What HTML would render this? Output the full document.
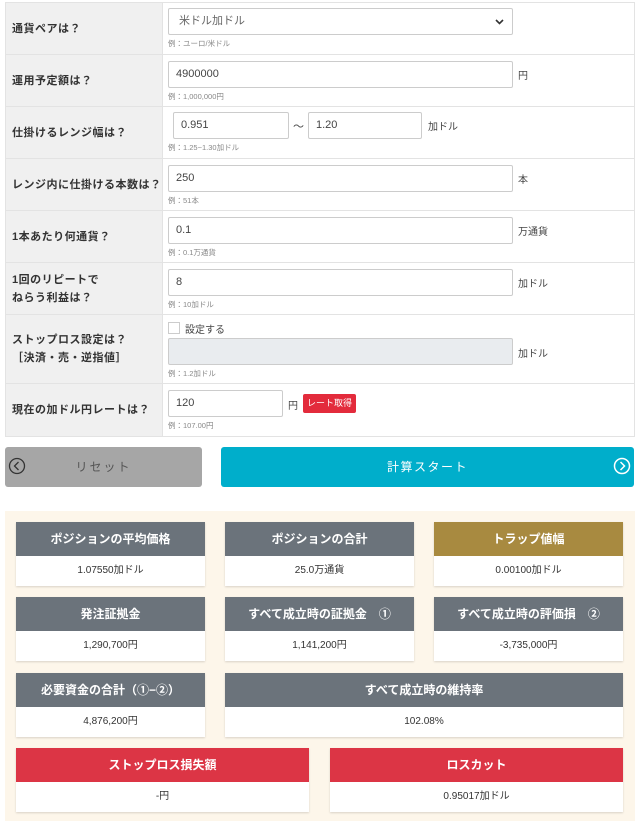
<!DOCTYPE html>
<html><head><meta charset="utf-8"><style>
*{box-sizing:border-box;margin:0;padding:0}
body{width:640px;height:821px;background:#fff;position:relative;font-family:"Liberation Sans","Noto Sans CJK JP",sans-serif;color:#333;overflow:hidden}
.a{position:absolute}
.row{position:absolute;left:5px;width:630px;border:1px solid #e3e3e3;border-top:none;background:#fff}
.lab{position:absolute;left:0;top:0;bottom:0;width:157px;background:#f0f0f0;border-right:1px solid #e3e3e3;font-size:11px;font-weight:bold;display:flex;align-items:center;padding-left:6px;line-height:18px;letter-spacing:.5px}
.inp{position:absolute;height:27px;border:1px solid #ccc;border-radius:2px;background:#fff;font-size:11px;padding-left:7px;line-height:25px;color:#444}
.hint{position:absolute;font-size:7.5px;color:#888}
.unit{position:absolute;font-size:10px;color:#444}
.card{position:absolute;box-shadow:0 1px 2px rgba(0,0,0,.15);background:#fff}
.card .h{height:34px;background:#6b737b;color:#fff;font-weight:bold;font-size:12px;text-align:center;line-height:34px}
.card .v{height:30px;font-size:10px;text-align:center;line-height:30px;color:#333}
</style></head><body>
<div class="a" style="left:5px;top:2px;width:630px;border-top:1px solid #e3e3e3"></div>
<div class="row" style="top:3px;height:52px"><div class="lab">通貨ペアは？</div></div>
<div class="row" style="top:55px;height:52px"><div class="lab">運用予定額は？</div></div>
<div class="row" style="top:107px;height:52px"><div class="lab">仕掛けるレンジ幅は？</div></div>
<div class="row" style="top:159px;height:52px"><div class="lab">レンジ内に仕掛ける本数は？</div></div>
<div class="row" style="top:211px;height:52px"><div class="lab">1本あたり何通貨？</div></div>
<div class="row" style="top:263px;height:52px"><div class="lab">1回のリピートで<br>ねらう利益は？</div></div>
<div class="row" style="top:315px;height:69px"><div class="lab">ストップロス設定は？<br>［決済・売・逆指値］</div></div>
<div class="row" style="top:384px;height:53px"><div class="lab">現在の加ドル円レートは？</div></div>

<div class="inp" style="left:168px;top:8px;width:345px;padding-left:10px;color:#666">米ドル加ドル<svg class="a" style="right:8px;top:10px" width="9" height="6" viewBox="0 0 9 6"><path d="M1 1L4.5 4.5L8 1" stroke="#333" stroke-width="1.6" fill="none"/></svg></div>
<div class="hint" style="left:168px;top:38px">例：ユーロ/米ドル</div>

<div class="inp" style="left:168px;top:61px;width:345px">4900000</div><div class="unit" style="left:518px;top:67px">円</div>
<div class="hint" style="left:168px;top:91px">例：1,000,000円</div>

<div class="inp" style="left:173px;top:112px;width:116px">0.951</div>
<div class="unit" style="left:293px;top:118px;font-size:11px">〜</div>
<div class="inp" style="left:308px;top:112px;width:114px">1.20</div>
<div class="unit" style="left:428px;top:118px">加ドル</div>
<div class="hint" style="left:168px;top:142px">例：1.25~1.30加ドル</div>

<div class="inp" style="left:168px;top:165px;width:345px">250</div><div class="unit" style="left:518px;top:171px">本</div>
<div class="hint" style="left:168px;top:195px">例：51本</div>

<div class="inp" style="left:168px;top:217px;width:345px">0.1</div><div class="unit" style="left:518px;top:223px">万通貨</div>
<div class="hint" style="left:168px;top:247px">例：0.1万通貨</div>

<div class="inp" style="left:168px;top:269px;width:345px">8</div><div class="unit" style="left:518px;top:275px">加ドル</div>
<div class="hint" style="left:168px;top:299px">例：10加ドル</div>

<div class="a" style="left:168px;top:322px;width:12px;height:12px;border:1px solid #ccc;background:#fff"></div>
<div class="unit" style="left:185px;top:321px">設定する</div>
<div class="inp" style="left:168px;top:338px;width:345px;background:#e9ecef"></div><div class="unit" style="left:518px;top:345px">加ドル</div>
<div class="hint" style="left:168px;top:368px">例：1.2加ドル</div>

<div class="inp" style="left:168px;top:390px;width:115px">120</div><div class="unit" style="left:288px;top:397px">円</div>
<div class="a" style="left:303px;top:394px;width:53px;height:19px;background:#e32b3c;border-radius:2px;color:#fff;font-size:9px;text-align:center;line-height:19px">レート取得</div>
<div class="hint" style="left:168px;top:420px">例：107.00円</div>

<div class="a" style="left:5px;top:447px;width:197px;height:40px;background:#a6a6a6;border-radius:3px;color:#555;font-size:12px;text-align:center;line-height:40px;letter-spacing:2px">リセット
<svg class="a" style="left:3px;top:10px" width="18" height="18" viewBox="0 0 18 18"><circle cx="9" cy="9" r="7.5" stroke="#333" stroke-width="1.3" fill="none"/><path d="M10.5 5L6.5 9L10.5 13" stroke="#333" stroke-width="1.3" fill="none"/></svg></div>
<div class="a" style="left:221px;top:447px;width:413px;height:40px;background:#00aecb;border-radius:3px;color:#fff;font-size:12px;text-align:center;line-height:40px;letter-spacing:1.5px">計算スタート
<svg class="a" style="right:3px;top:10px" width="18" height="18" viewBox="0 0 18 18"><circle cx="9" cy="9" r="7.5" stroke="#fff" stroke-width="1.5" fill="none"/><path d="M7.5 5L11.5 9L7.5 13" stroke="#fff" stroke-width="1.5" fill="none"/></svg></div>

<div class="a" style="left:5px;top:511px;width:630px;height:310px;background:#fdf6ea"></div>
<div class="card" style="left:16px;top:522px;width:189px"><div class="h">ポジションの平均価格</div><div class="v">1.07550加ドル</div></div>
<div class="card" style="left:225px;top:522px;width:189px"><div class="h">ポジションの合計</div><div class="v">25.0万通貨</div></div>
<div class="card" style="left:434px;top:522px;width:189px"><div class="h" style="background:#a88a40">トラップ値幅</div><div class="v">0.00100加ドル</div></div>
<div class="card" style="left:16px;top:597px;width:189px"><div class="h">発注証拠金</div><div class="v">1,290,700円</div></div>
<div class="card" style="left:225px;top:597px;width:189px"><div class="h">すべて成立時の証拠金　①</div><div class="v">1,141,200円</div></div>
<div class="card" style="left:434px;top:597px;width:189px"><div class="h">すべて成立時の評価損　②</div><div class="v">-3,735,000円</div></div>
<div class="card" style="left:16px;top:673px;width:189px"><div class="h">必要資金の合計（①−②）</div><div class="v">4,876,200円</div></div>
<div class="card" style="left:225px;top:673px;width:398px"><div class="h">すべて成立時の維持率</div><div class="v">102.08%</div></div>
<div class="card" style="left:16px;top:748px;width:293px"><div class="h" style="background:#dc3545">ストップロス損失額</div><div class="v">-円</div></div>
<div class="card" style="left:330px;top:748px;width:293px"><div class="h" style="background:#dc3545">ロスカット</div><div class="v">0.95017加ドル</div></div>
</body></html>
